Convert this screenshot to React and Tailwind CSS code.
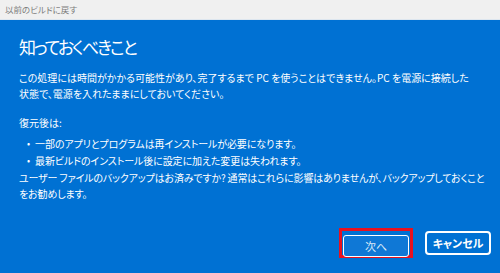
import React from 'react';

const font = { fontFamily: '"Noto Sans CJK JP", "Noto Sans", sans-serif' };

// 箇条書きの一行
const Bullet = ({ children }) => (
  <div className="flex items-center h-[17px] whitespace-nowrap">
    <span className="w-[16px] pl-[8px] text-[9px]">•</span>
    <span>{children}</span>
  </div>
);

function App() {
  return (
    <div
      className="w-[500px] h-[273px] overflow-hidden flex flex-col [font-feature-settings:'palt']"
      style={font}
    >
      {/* タイトルバー */}
      <div className="h-[20px] shrink-0 bg-[#f0f0f0] border-b border-[#dde6ef] flex items-center pl-[5px] text-[8.5px] text-[#7c7c7c]">
        以前のビルドに戻す
      </div>

      {/* 本文 */}
      <div className="flex-1 bg-[#0071d3] text-white flex flex-col pl-[19px] pr-[9px]">
        <h1 className="text-[17px] leading-[26px] mt-[14px] font-normal tracking-[-2px]">
          知っておくべきこと
        </h1>

        <div className="text-[10px] leading-[16px] mt-[10px] whitespace-nowrap">
          <p>この処理には時間がかかる可能性があり、完了するまで PC を使うことはできません。PC を電源に接続した</p>
          <p>状態で、電源を入れたままにしておいてください。</p>
        </div>

        <p className="text-[10px] leading-[16px] mt-[13px]">復元後は:</p>

        <div className="text-[10px] mt-[4px] tracking-[-0.1px]">
          <Bullet>一部のアプリとプログラムは再インストールが必要になります。</Bullet>
          <Bullet>最新ビルドのインストール後に設定に加えた変更は失われます。</Bullet>
        </div>

        <div className="text-[10px] leading-[16px] mt-[1px] whitespace-nowrap tracking-[-0.15px]">
          <p>ユーザー ファイルのバックアップはお済みですか? 通常はこれらに影響はありませんが、バックアップしておくこと</p>
          <p>をお勧めします。</p>
        </div>

        <div className="flex-1" />

        {/* ボタン */}
        <div className="flex items-center justify-end gap-[12px] pb-[15px]">
          <div className="w-[74px] h-[30px] border-[3px] border-[#e8111f] p-[1px]">
            <button className="w-full h-full border border-white rounded-[3px] bg-[#0f78d6] text-[11px] text-[#dbeaf8]">
              次へ
            </button>
          </div>
          <button className="w-[66px] h-[24px] border-2 border-white rounded-[4px] text-[11px] font-semibold text-white">
            キャンセル
          </button>
        </div>
      </div>
    </div>
  );
}

export default App;
